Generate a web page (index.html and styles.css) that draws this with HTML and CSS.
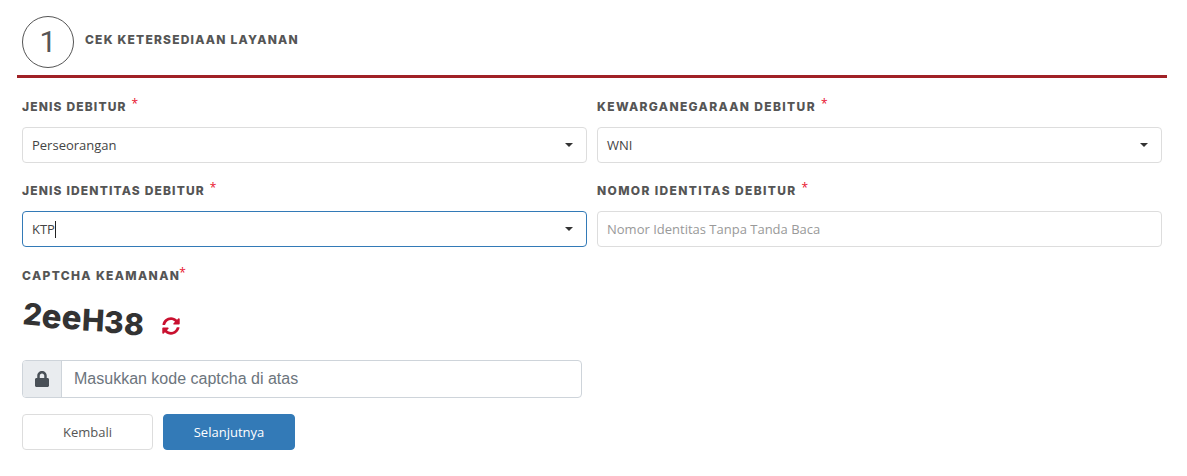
FILE: index.html
```
<!DOCTYPE html>
<html lang="id">
<head>
<meta charset="utf-8">
<title>Cek Ketersediaan Layanan</title>
<link rel="stylesheet" href="styles.css">
</head>
<body>
<main class="page">
  <header class="step">
    <div class="step-num">1</div>
    <h2 class="step-title">CEK KETERSEDIAAN LAYANAN</h2>
  </header>
  <div class="grid">
    <div class="field">
      <label class="label narrow">JENIS DEBITUR <sup class="req">*</sup></label>
      <div class="control"><span class="val">Perseorangan</span><i class="caret"></i></div>
    </div>
    <div class="field">
      <label class="label">KEWARGANEGARAAN DEBITUR <sup class="req">*</sup></label>
      <div class="control"><span class="val">WNI</span><i class="caret"></i></div>
    </div>
    <div class="field">
      <label class="label narrow">JENIS IDENTITAS DEBITUR <sup class="req">*</sup></label>
      <div class="control focus"><span class="val">KTP</span><span class="cursor"></span><i class="caret"></i></div>
    </div>
    <div class="field">
      <label class="label">NOMOR IDENTITAS DEBITUR <sup class="req">*</sup></label>
      <div class="control"><span class="val ph">Nomor Identitas Tanpa Tanda Baca</span></div>
    </div>
  </div>
  <section class="captcha">
    <label class="label">CAPTCHA KEAMANAN<sup class="req tight">*</sup></label>
    <div class="captcha-row">
      <div class="captcha-img"><span class="c1">2</span><span class="c2">e</span><span class="c3">e</span><span class="c4">H</span><span class="c5">3</span><span class="c6">8</span></div>
      <svg class="refresh" viewBox="0 0 512 512" width="18" height="18" aria-hidden="true"><path fill="#c9102f" d="M370.7 133.3C339.5 104 298.9 88 255.800 88c-77.500.1-144.300 53.200-162.800 126.900-1.300 5.400-6.100 9.200-11.700 9.200H24.100c-7.500 0-13.200-6.800-11.800-14.200C33.900 94.900 134.800 8 256 8c66.400 0 126.800 26.100 171.300 68.700L463 41C478.100 25.900 504 36.600 504 57.900V192c0 13.300-10.700 24-24 24H345.900c-21.400 0-32.100-25.900-17-41l41.800-41.700zM32 296h134.100c21.400 0 32.100 25.900 17 41l-41.800 41.800c31.300 29.300 71.800 45.300 114.900 45.200 77.400-.1 144.300-53.100 162.800-126.800 1.300-5.400 6.100-9.200 11.700-9.200h57.300c7.500 0 13.200 6.800 11.800 14.200C478.100 417.100 377.200 504 256 504c-66.400 0-126.800-26.100-171.300-68.700L49 471C33.900 486.100 8 475.400 8 454.100V320c0-13.300 10.700-24 24-24z"/></svg>
    </div>
    <div class="input-group">
      <span class="addon"><svg viewBox="0 0 448 512" width="14" height="16" aria-hidden="true"><path fill="#495057" d="M400 224h-24v-72C376 68.200 307.800 0 224 0S72 68.200 72 152v72H48c-26.500 0-48 21.500-48 48v192c0 26.500 21.500 48 48 48h352c26.500 0 48-21.500 48-48V272c0-26.500-21.500-48-48-48zm-104 0H152v-72c0-39.700 32.300-72 72-72s72 32.300 72 72v72z"/></svg></span>
      <span class="input-text">Masukkan kode captcha di atas</span>
    </div>
    <div class="actions">
      <button class="btn btn-light" type="button">Kembali</button>
      <button class="btn btn-primary" type="button">Selanjutnya</button>
    </div>
  </section>
</main>
</body>
</html>
```
FILE: styles.css
```
* { box-sizing: border-box; }
html, body { margin: 0; padding: 0; background: #fff; }
body { width: 1187px; height: 476px; overflow: hidden; font-family: "Open Sans", sans-serif; }
.page { padding: 16px 20px 0 17px; }
.step { display: flex; align-items: flex-start; gap: 11px; height: 61px; padding-left: 5px; }
.step-num { width: 52px; height: 52px; border: 1px solid #555; border-radius: 50%; display: flex; align-items: center; justify-content: center; font: 400 30px/1 Roboto, sans-serif; color: #555; }
.step-title { margin: 15px 0 0; font: 800 12px/18px Inter, sans-serif; letter-spacing: 1.2px; color: #555; white-space: nowrap; }
.grid { display: grid; grid-template-columns: 575px 575px; border-top: 3px solid #a02126; padding-top: 18px; row-gap: 17px; margin-top: -2px; }
.field { padding: 0 5px; }
.label { display: block; height: 21px; font: 800 12px/21px Inter, sans-serif; letter-spacing: 1.35px; color: #555; white-space: nowrap; }
.label.narrow { letter-spacing: 1.15px; }
.req { color: #e8112d; font: 400 12px/1 "Open Sans", sans-serif; margin-left: 1px; vertical-align: 3px; letter-spacing: 0; }
.req.tight { margin-left: -1px; }
.control { margin-top: 10px; height: 36px; border: 1px solid #ddd; border-radius: 4px; background: #fff; display: flex; align-items: center; padding: 0 9px; position: relative; font-size: 13px; color: #444; }
.control.focus { border-color: #337ab7; }
.val { line-height: 18px; }
.ph { color: #999; }
.cursor { width: 1px; height: 17px; background: #222; }
.caret { position: absolute; right: 13px; top: 15px; width: 0; height: 0; border-left: 4px solid transparent; border-right: 4px solid transparent; border-top: 4px solid #333; }
.captcha { padding: 0 5px; margin-top: 18px; }
.captcha-row { display: flex; align-items: flex-start; height: 40px; margin-top: 12px; }
.captcha-img { width: 140px; display: flex; align-items: baseline; padding-left: 1px; font: 800 30px/40px Inter, sans-serif; color: #333; }
.captcha-img span { display: inline-block; }
.c1 { transform: translateY(-5px) rotate(6deg); }
.c2, .c3 { font-size: 33px; }
.c2 { transform: translateY(-2px) rotate(6deg); }
.c3 { transform: translateY(-1px) rotate(6deg); }
.c4 { transform: translateY(1px) rotate(3deg); }
.c5 { transform: translateY(3px) rotate(3deg); }
.c6 { transform: translateY(5px) rotate(3deg); }
.refresh { display: block; margin-top: 19px; margin-left: 0; }
.input-group { margin-top: 22px; width: 560px; height: 38px; display: flex; border: 1px solid #ced4da; border-radius: 4px; background: #fff; overflow: hidden; }
.addon { width: 39px; flex: none; background: #e9ecef; border-right: 1px solid #ced4da; display: flex; align-items: center; justify-content: center; }
.input-text { padding-left: 12px; font: 400 16px/36px "Liberation Sans", sans-serif; color: #6c757d; }
.actions { display: flex; gap: 10px; margin-top: 16px; }
.btn { height: 36px; border-radius: 4px; font: 400 13px/1 "Open Sans", sans-serif; padding: 0; }
.btn-light { width: 131px; background: #fff; border: 1px solid #ddd; color: #555; }
.btn-primary { width: 132px; background: #337ab7; border: 1px solid #337ab7; color: #fff; }
```
